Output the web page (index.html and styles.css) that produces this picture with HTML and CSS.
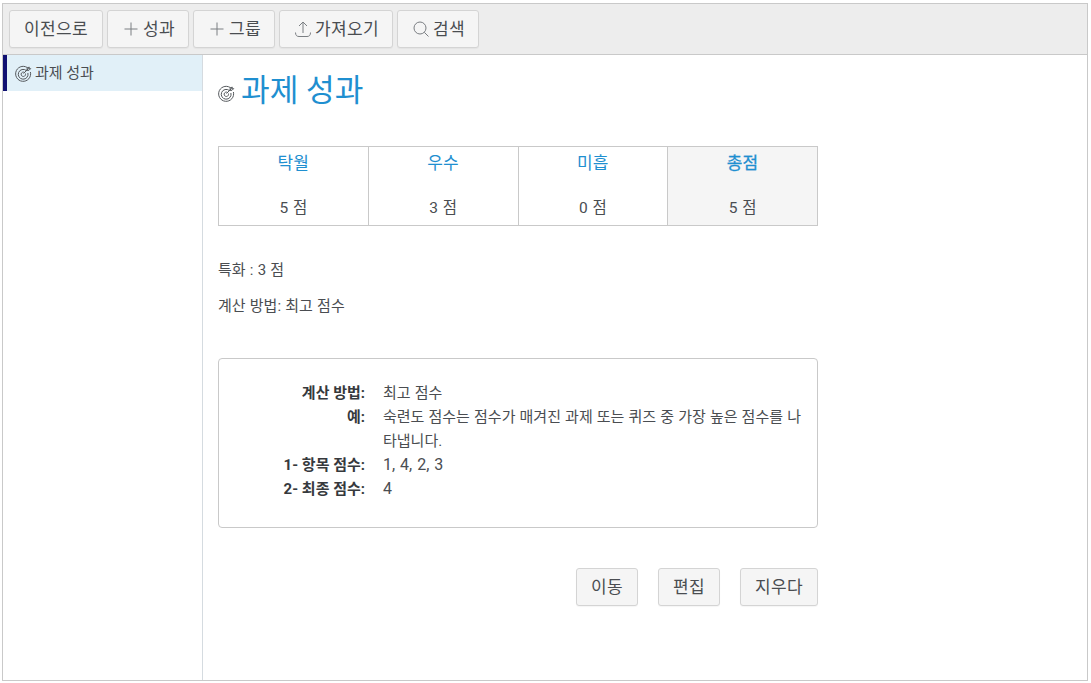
FILE: index.html
```html
<!DOCTYPE html>
<html lang="ko">
<head>
<meta charset="utf-8">
<title>과제 성과</title>
<link rel="stylesheet" href="styles.css">
</head>
<body>
<div class="frame">
  <div class="toolbar">
    <button class="btn">이전으로</button>
    <button class="btn with-icon"><svg class="ic" viewBox="0 0 16 16"><path d="M8 1.500v13M1.500 8h13"/></svg>성과</button>
    <button class="btn with-icon"><svg class="ic" viewBox="0 0 16 16"><path d="M8 1.500v13M1.500 8h13"/></svg>그룹</button>
    <button class="btn with-icon"><svg class="ic" viewBox="0 0 16 16"><path d="M8 12V1M4 5l4-4 4 4M.5 11.500c0 3 1.500 4 3.500 4h8c2 0 3.500-1 3.500-4"/></svg>가져오기</button>
    <button class="btn with-icon"><svg class="ic" viewBox="0 0 16 16"><circle cx="7" cy="7" r="6"/><path d="m11.300 11.300 4.200 4.200"/></svg>검색</button>
  </div>
  <div class="main">
    <nav class="side">
      <div class="side-item"><svg class="tg" viewBox="0 0 17 17"><path d="M13.500 3.600A7.500 7.500 0 1 0 15.400 7M11.400 5.600A4.900 4.900 0 1 0 12.900 8M9.300 7.300A2.200 2.200 0 1 0 10.400 8.500M8.500 8.500l5-5M12 3.300v2h2l1.700-1.700h-1.500V2z"/></svg>과제 성과</div>
    </nav>
    <main class="content">
      <h1 class="title"><svg class="tg" viewBox="0 0 17 17"><path d="M13.500 3.600A7.500 7.500 0 1 0 15.400 7M11.400 5.600A4.900 4.900 0 1 0 12.900 8M9.300 7.300A2.200 2.200 0 1 0 10.400 8.500M8.500 8.500l5-5M12 3.300v2h2l1.700-1.700h-1.500V2z"/></svg>과제 성과</h1>
      <table class="score">
        <tr><th>탁월</th><th>우수</th><th>미흡</th><th class="total strong">총점</th></tr>
        <tr><td>5 점</td><td>3 점</td><td>0 점</td><td class="total">5 점</td></tr>
      </table>
      <p class="note first">특화 : 3 점</p>
      <p class="note">계산 방법: 최고 점수</p>
      <div class="box">
        <dl class="info">
          <dt>계산 방법:</dt><dd>최고 점수</dd>
          <dt>예:</dt><dd>숙련도 점수는 점수가 매겨진 과제 또는 퀴즈 중 가장 높은 점수를 나타냅니다.</dd>
          <dt>1- 항목 점수:</dt><dd class="num">1, 4, 2, 3</dd>
          <dt>2- 최종 점수:</dt><dd class="num">4</dd>
        </dl>
      </div>
      <div class="actions">
        <button class="btn act">이동</button>
        <button class="btn act">편집</button>
        <button class="btn act">지우다</button>
      </div>
    </main>
  </div>
</div>
</body>
</html>
```
FILE: styles.css
```css
* { box-sizing: border-box; }
html, body { height: 100%; }
body {
  margin: 0;
  padding: 3px 3px 2px 2px;
  background: #fff;
  color: #4a4d51;
  font-family: Roboto, "Noto Sans CJK KR", sans-serif;
  font-size: 15px;
}
.frame {
  height: 678px;
  border: 1px solid #c9c9c9;
  display: flex;
  flex-direction: column;
}
.toolbar {
  height: 51px;
  flex: none;
  background: #ededed;
  border-bottom: 1px solid #c9c9c9;
  padding: 6px 6px 0;
  display: flex;
  gap: 4px;
  align-items: flex-start;
}
.btn {
  height: 38px;
  padding: 0 14px 4px;
  background: #f5f5f5;
  border: 1px solid #d4d4d4;
  border-radius: 3px;
  color: #4a4d51;
  font: inherit;
  font-size: 17px;
  letter-spacing: .35px;
  white-space: nowrap;
  display: inline-flex;
  align-items: center;
  justify-content: center;
  box-shadow: 0 1px 1px rgba(0,0,0,.04);
}
.with-icon { padding-right: 13px; }
.ic {
  width: 16px;
  height: 16px;
  margin: 4px 4px 0 1px;
  fill: none;
  stroke: #7a7e82;
  stroke-width: 1;
}
.main { flex: 1; display: flex; min-height: 0; }
.side { width: 200px; flex: none; border-right: 1px solid #d5dbe0; }
.side-item {
  height: 36px;
  background: #e1f0f8;
  border-left: 4px solid #101072;
  padding: 0 0 4px 8px;
  display: flex;
  align-items: center;
  gap: 3px;
}
.side-item .tg { margin-top: 4px; }
.tg {
  width: 17px;
  height: 17px;
  flex: none;
  fill: none;
  stroke: #55595d;
  stroke-width: 1;
}
.content { flex: 1; padding: 0 15px; }
.title {
  margin: 0;
  height: 91px;
  padding-top: 15px;
  display: flex;
  align-items: flex-start;
  font-size: 31.200px;
  line-height: 42px;
  font-weight: 400;
  color: #1f8fd0;
}
.title .tg { margin: 15px 6px 0 0; }
.score {
  width: 600px;
  height: 79px;
  border-collapse: collapse;
  table-layout: fixed;
}
.score th, .score td {
  border-left: 1px solid #c9c9c9;
  border-right: 1px solid #c9c9c9;
  text-align: center;
  padding: 0;
}
.score tr:first-child th {
  border-top: 1px solid #c9c9c9;
  height: 35px;
  padding-bottom: 5px;
  font-size: 17px;
  letter-spacing: .35px;
  font-weight: 400;
  color: #1f8fd0;
}
.score td {
  border-bottom: 1px solid #c9c9c9;
  height: 44px;
  padding-top: 6px;
  font-size: 15.500px;
  word-spacing: 1px;
}
.score .total { background: #f5f5f5; }
.score tr:first-child .strong { -webkit-text-stroke: .3px #1f8fd0; }
.note { margin: 0 0 16px; line-height: 20px; word-spacing: .5px; }
.note.first { margin-top: 34px; }
.box {
  width: 600px;
  height: 170px;
  margin-top: 42px;
  border: 1px solid #c9c9c9;
  border-radius: 4px;
  padding: 22px 15px 0 0;
}
.info {
  margin: 0;
  display: grid;
  grid-template-columns: 146px 1fr;
  column-gap: 18px;
  line-height: 24px;
}
.info dt { text-align: right; font-weight: 700; color: #36393d; }
.info dd { margin: 0; word-spacing: .4px; }
.info .num { font-size: 16px; word-spacing: 1px; }
.actions {
  width: 600px;
  margin-top: 40px;
  display: flex;
  justify-content: flex-end;
  gap: 20px;
}
.act { width: 62px; padding: 0 0 4px; }
.act:last-child { width: 78px; }
```
